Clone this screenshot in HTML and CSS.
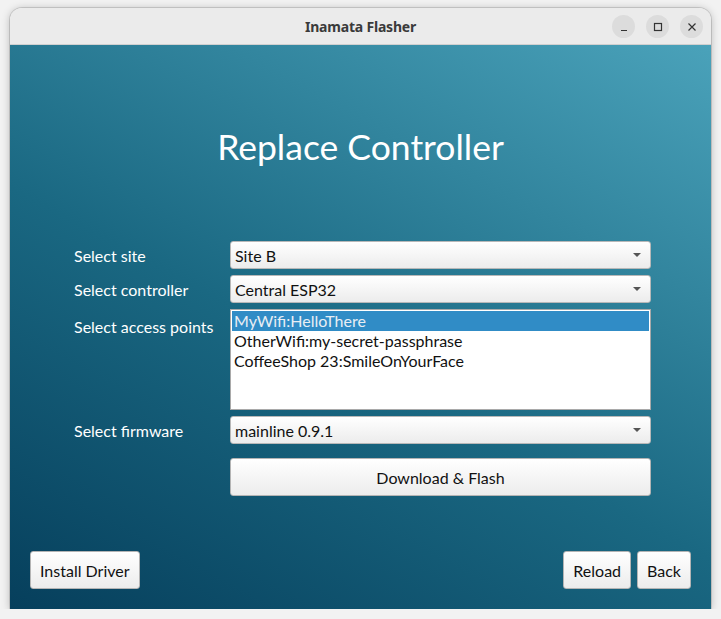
FILE: index.html
```html
<!DOCTYPE html>
<html>
<head>
<meta charset="utf-8">
<link rel="stylesheet" href="styles.css">
</head>
<body>
<div class="window">
  <div class="titlebar">
    <span class="title">Inamata Flasher</span>
    <div class="controls">
      <span class="ctl"><svg width="10" height="10" viewBox="0 0 10 10"><path d="M2 8.5h6" stroke="#333" stroke-width="1.2"/></svg></span>
      <span class="ctl"><svg width="10" height="10" viewBox="0 0 10 10"><rect x="1.5" y="1.5" width="7" height="7" fill="none" stroke="#333" stroke-width="1.2"/></svg></span>
      <span class="ctl"><svg width="10" height="10" viewBox="0 0 10 10"><path d="M1.5 1.5l7 7M8.5 1.5l-7 7" stroke="#333" stroke-width="1.2"/></svg></span>
    </div>
  </div>
  <div class="content">
    <h1 class="heading">Replace Controller</h1>
    <div class="form">
      <label class="lbl">Select site</label>
      <div class="select"><span>Site B</span><span class="arrow"></span></div>
      <label class="lbl">Select controller</label>
      <div class="select"><span>Central ESP32</span><span class="arrow"></span></div>
      <label class="lbl lbl-top">Select access points</label>
      <div class="list">
        <div class="item selected">MyWifi:HelloThere</div>
        <div class="item">OtherWifi:my-secret-passphrase</div>
        <div class="item">CoffeeShop 23:SmileOnYourFace</div>
      </div>
      <label class="lbl">Select firmware</label>
      <div class="select"><span>mainline 0.9.1</span><span class="arrow"></span></div>
      <span></span>
      <button class="btn wide">Download &amp; Flash</button>
    </div>
    <div class="footer">
      <button class="btn">Install Driver</button>
      <div class="right">
        <button class="btn">Reload</button>
        <button class="btn">Back</button>
      </div>
    </div>
  </div>
</div>
</body>
</html>
```
FILE: styles.css
```css
html, body {
  margin: 0;
  padding: 0;
  background: #f2f2f2;
  font-family: Lato, "Open Sans", sans-serif;
}
body {
  padding: 8px 10px 0 10px;
  width: 701px;
}
.window {
  width: 701px;
  height: 601px;
  border-radius: 12px 12px 0 0;
  box-shadow: 0 1px 8px rgba(0,0,0,0.25), 0 0 0 1px rgba(0,0,0,0.12);
  display: flex;
  flex-direction: column;
  overflow: hidden;
}
.titlebar {
  height: 36px;
  flex: none;
  background: #ebebeb;
  border-bottom: 1px solid #d0d0d0;
  position: relative;
  display: flex;
  align-items: center;
  justify-content: center;
}
.title {
  font-family: "Noto Sans", "DejaVu Sans", sans-serif;
  font-weight: 700;
  font-size: 14px;
  color: #3a3a3a;
  letter-spacing: -0.2px;
}
.controls {
  position: absolute;
  right: 8px;
  top: 7px;
  display: flex;
  gap: 11px;
}
.ctl {
  width: 23px;
  height: 23px;
  border-radius: 50%;
  background: #dcdcdc;
  display: flex;
  align-items: center;
  justify-content: center;
}
.content {
  flex: 1;
  background: linear-gradient(28deg, #063f5c 0%, #1a6882 45%, #4aa2ba 100%);
  display: flex;
  flex-direction: column;
  padding: 0 20px 20px 20px;
}
.heading {
  margin: 80px 0 0 0;
  text-align: center;
  font-weight: 400;
  font-size: 35.5px;
  line-height: 44px;
  color: #ffffff;
}
.form {
  margin: 72px 40px 0 44px;
  display: grid;
  grid-template-columns: 156px 421px;
  row-gap: 6px;
  align-items: center;
}
.lbl {
  color: #ffffff;
  font-size: 16px;
}
.lbl-top {
  align-self: start;
  padding-top: 8px;
}
.select {
  height: 26px;
  background: linear-gradient(#ffffff, #ececec);
  border: 1px solid #b8b8b8;
  border-radius: 3px;
  display: flex;
  align-items: center;
  justify-content: space-between;
  padding: 0 9px 0 4px;
  font-size: 16px;
  color: #111;
}
.arrow {
  width: 0;
  height: 0;
  border-left: 4px solid transparent;
  border-right: 4px solid transparent;
  border-top: 4px solid #555;
}
.list {
  height: 97px;
  background: #fff;
  border: 1px solid #a9a9a9;
  font-size: 16px;
  color: #111;
  padding: 1px;
}
.item {
  height: 20px;
  line-height: 20px;
  padding-left: 2px;
}
.item.selected {
  background: #308cc6;
  color: #e8eef4;
}
.btn {
  font-family: Lato, "Open Sans", sans-serif;
  font-size: 16px;
  color: #111;
  background: linear-gradient(#ffffff, #ececec);
  border: 1px solid #b4b4b4;
  border-radius: 3px;
  height: 38px;
  padding: 0 9px;
  margin: 0;
}
.btn.wide {
  margin-top: 8px;
  width: 421px;
  height: 38px;
}
.btn.first {
  padding: 0 10px;
}
.footer {
  margin-top: auto;
  display: flex;
  justify-content: space-between;
  align-items: center;
}
.right {
  display: flex;
  gap: 6px;
}
```
